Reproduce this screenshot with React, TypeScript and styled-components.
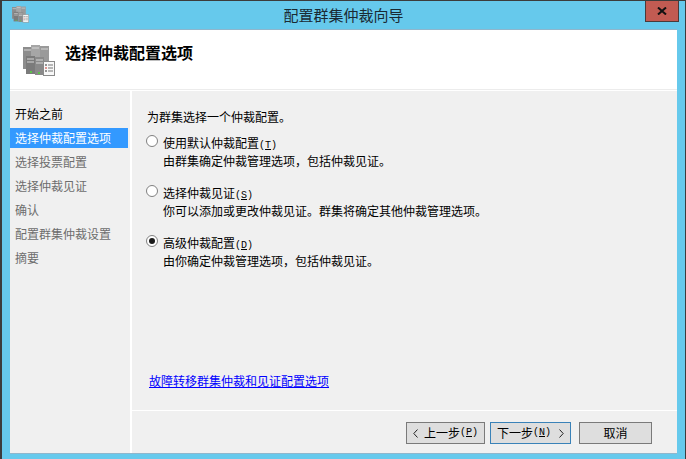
import styled, { createGlobalStyle } from "styled-components";

const GlobalStyle = createGlobalStyle`
  html, body {
    margin: 0;
    padding: 0;
    background: #fff;
  }
  #root {
    width: 686px;
    height: 459px;
  }
`;

const WizardWindow = styled.div`
  width: 686px;
  height: 459px;
  box-sizing: border-box;
  display: flex;
  flex-direction: column;
  background: #66c9ec;
  border: solid #3c3c3c;
  border-width: 1px 1px 0 2px;
  font-family: "Noto Sans CJK SC", "Liberation Sans", sans-serif;
  font-size: 12px;
  color: #000;
  overflow: hidden;
`;

const TitleBar = styled.div`
  height: 29px;
  flex: none;
  display: flex;
  align-items: flex-start;
  position: relative;
`;

const TitleIcon = styled.div`
  margin: 5px 0 0 10px;
  height: 18px;
`;

const TitleText = styled.div`
  position: absolute;
  left: 0;
  right: 0;
  top: 5px;
  text-align: center;
  font-size: 15px;
  line-height: 18px;
  color: #1a2a33;
`;

const CloseButton = styled.div`
  position: absolute;
  top: -1px;
  right: 6px;
  width: 34px;
  height: 22px;
  box-sizing: border-box;
  background: #c25b52;
  border: 1px solid #4a3a3a;
  border-top: none;
  display: flex;
  align-items: center;
  justify-content: center;
`;

const Body = styled.div`
  flex: none;
  width: 667px;
  height: 423px;
  margin-left: 8px;
  display: flex;
  flex-direction: column;
  background: #fff;
  box-shadow: 0 -1px 0 #8fb6cc, 0 1px 0 #8fb6cc;
`;

const Header = styled.div`
  height: 60px;
  flex: none;
  display: flex;
  align-items: flex-start;
  box-sizing: border-box;
  padding: 15px 0 0 13px;
  gap: 10px;
  border-bottom: 1px solid #ececec;
`;

const HeaderTitle = styled.div`
  font-size: 16px;
  font-weight: 700;
  line-height: 18px;
  margin-top: -2px;
`;

const Columns = styled.div`
  flex: 1;
  display: flex;
  gap: 2px;
  min-height: 0;
  border-top: 1px solid #fff;
`;

const Sidebar = styled.div`
  width: 120px;
  flex: none;
  background: #f0f0f0;
  padding-top: 13px;
`;

const StepItem = styled.div<{ $state: "done" | "active" | "todo" }>`
  height: 20px;
  line-height: 20px;
  margin: 0 2px 4px 0;
  padding-left: 5px;
  white-space: nowrap;
  background: ${(p) => (p.$state === "active" ? "#3399ff" : "transparent")};
  color: ${(p) => (p.$state === "active" ? "#fff" : p.$state === "done" ? "#000" : "#6d6d6d")};
`;

const MainColumn = styled.div`
  flex: 1;
  display: flex;
  flex-direction: column;
  min-width: 0;
`;

const Content = styled.div`
  flex: 1;
  background: #f0f0f0;
  display: flex;
  flex-direction: column;
  padding: 17px 0 0 15px;
  box-sizing: border-box;
`;

const Intro = styled.div`
  line-height: 17px;
  margin-bottom: 9px;
`;

const OptionRow = styled.div`
  display: flex;
  gap: 5px;
  margin-bottom: 14px;
`;

const Radio = styled.span<{ $checked?: boolean }>`
  width: 12px;
  height: 12px;
  margin: 1px 0 0 -1px;
  flex: none;
  box-sizing: border-box;
  border-radius: 50%;
  border: 1px solid #808080;
  background: #fff;
  display: flex;
  align-items: center;
  justify-content: center;
  &::after {
    content: "";
    width: 6px;
    height: 6px;
    border-radius: 50%;
    background: ${(p) => (p.$checked ? "#1a1a1a" : "transparent")};
  }
`;

const OptionText = styled.div`
  display: flex;
  flex-direction: column;
`;

const OptionLine = styled.div`
  height: 18px;
  line-height: 18px;
  white-space: nowrap;
`;

const Shortcut = styled.span`
  font-family: "Liberation Mono", monospace;
  font-size: 10px;
  line-height: 1;
`;

const Mnemonic = styled.span`
  text-decoration: underline;
`;

const HelpLink = styled.a`
  margin: auto 0 21px 2px;
  color: #0000ff;
  text-decoration: underline;
  line-height: 17px;
  cursor: pointer;
`;

const Footer = styled.div`
  height: 43px;
  flex: none;
  background: #f0f0f0;
  border-top: 1px solid #fff;
  display: flex;
  align-items: flex-start;
  padding: 11px 0 0 274px;
  box-sizing: border-box;
`;

const WizardButton = styled.button<{ $primary?: boolean; $width: number; $gap?: number }>`
  width: ${(p) => p.$width}px;
  height: 22px;
  box-sizing: border-box;
  padding: 0 6px;
  margin-right: ${(p) => p.$gap ?? 0}px;
  display: flex;
  align-items: center;
  justify-content: center;
  background: #dedede;
  border: 1px solid ${(p) => (p.$primary ? "#3a82b8" : "#7a7a7a")};
  font-family: inherit;
  font-size: 12px;
  line-height: 18px;
  color: #000;
  white-space: nowrap;
`;

const Chevron = styled.svg<{ $side: "left" | "right" }>`
  flex: none;
  margin: ${(p) => (p.$side === "left" ? "0 6px 0 0" : "0 0 0 8px")};
`;

const ServerIcon = ({ size }: { size: number }) => (
  <svg width={size} height={size} viewBox="0 0 32 32" style={{ display: "block" }}>
    <rect x="0" y="2" width="9" height="22" fill="#8d8d8d" />
    <rect x="8" y="0" width="9" height="22" fill="#a6a6a6" />
    <rect x="17" y="1" width="9" height="20" fill="#9a9a9a" />
    <rect x="3" y="11" width="9" height="18" fill="#7b7b7b" />
    <rect x="12" y="12" width="9" height="18" fill="#8a8a8a" />
    <path d="M1 5h7M9 3h7M18 4h7M4 14h7M13 15h7M4 17h7M13 18h7" stroke="#d5d5d5" strokeWidth="1.2" />
    <rect x="7" y="26" width="2" height="2" fill="#5cc24a" />
    <rect x="15" y="27" width="2" height="2" fill="#5cc24a" />
    <rect x="20.5" y="16.5" width="11" height="14" fill="#f8f8f8" stroke="#8b8b8b" />
    <path d="M25 20h5M25 23h5M25 26h5" stroke="#777" />
    <path d="M22 20h2" stroke="#333" />
    <path d="M22 23h2" stroke="#c8322a" />
    <path d="M22 26h2" stroke="#333" />
  </svg>
);

const steps: { label: string; state: "done" | "active" | "todo" }[] = [
  { label: "开始之前", state: "done" },
  { label: "选择仲裁配置选项", state: "active" },
  { label: "选择投票配置", state: "todo" },
  { label: "选择仲裁见证", state: "todo" },
  { label: "确认", state: "todo" },
  { label: "配置群集仲裁设置", state: "todo" },
  { label: "摘要", state: "todo" },
];

const options = [
  { title: "使用默认仲裁配置", key: "T", desc: "由群集确定仲裁管理选项，包括仲裁见证。" },
  { title: "选择仲裁见证", key: "S", desc: "你可以添加或更改仲裁见证。群集将确定其他仲裁管理选项。" },
  { title: "高级仲裁配置", key: "D", desc: "由你确定仲裁管理选项，包括仲裁见证。", checked: true },
];

const App = () => {
  return (
    <>
      <GlobalStyle />
      <WizardWindow>
        <TitleBar>
          <TitleIcon>
            <ServerIcon size={17} />
          </TitleIcon>
          <TitleText>配置群集仲裁向导</TitleText>
          <CloseButton>
            <svg width="10" height="8" viewBox="0 0 10 8">
              <path d="M1 0.5l8 7M9 0.5l-8 7" stroke="#111" strokeWidth="2" />
            </svg>
          </CloseButton>
        </TitleBar>
        <Body>
          <Header>
            <ServerIcon size={32} />
            <HeaderTitle>选择仲裁配置选项</HeaderTitle>
          </Header>
          <Columns>
            <Sidebar>
              {steps.map((s) => (
                <StepItem key={s.label} $state={s.state}>
                  {s.label}
                </StepItem>
              ))}
            </Sidebar>
            <MainColumn>
              <Content>
                <Intro>为群集选择一个仲裁配置。</Intro>
                {options.map((o) => (
                  <OptionRow key={o.key}>
                    <Radio $checked={o.checked} />
                    <OptionText>
                      <OptionLine>
                        {o.title}
                        <Shortcut>
                          (<Mnemonic>{o.key}</Mnemonic>)
                        </Shortcut>
                      </OptionLine>
                      <OptionLine>{o.desc}</OptionLine>
                    </OptionText>
                  </OptionRow>
                ))}
                <HelpLink>故障转移群集仲裁和见证配置选项</HelpLink>
              </Content>
              <Footer>
                <WizardButton $width={79} $gap={5}>
                  <Chevron $side="left" width="5" height="9" viewBox="0 0 5 9">
                    <path d="M4.5 0.5L0.8 4.5L4.5 8.5" fill="none" stroke="#222" />
                  </Chevron>
                  上一步
                  <Shortcut>
                    (<Mnemonic>P</Mnemonic>)
                  </Shortcut>
                </WizardButton>
                <WizardButton $width={81} $primary $gap={8}>
                  下一步
                  <Shortcut>
                    (<Mnemonic>N</Mnemonic>)
                  </Shortcut>
                  <Chevron $side="right" width="5" height="9" viewBox="0 0 5 9">
                    <path d="M0.5 0.5L4.2 4.5L0.5 8.5" fill="none" stroke="#222" />
                  </Chevron>
                </WizardButton>
                <WizardButton $width={73}>取消</WizardButton>
              </Footer>
            </MainColumn>
          </Columns>
        </Body>
      </WizardWindow>
    </>
  );
};

export default App;
